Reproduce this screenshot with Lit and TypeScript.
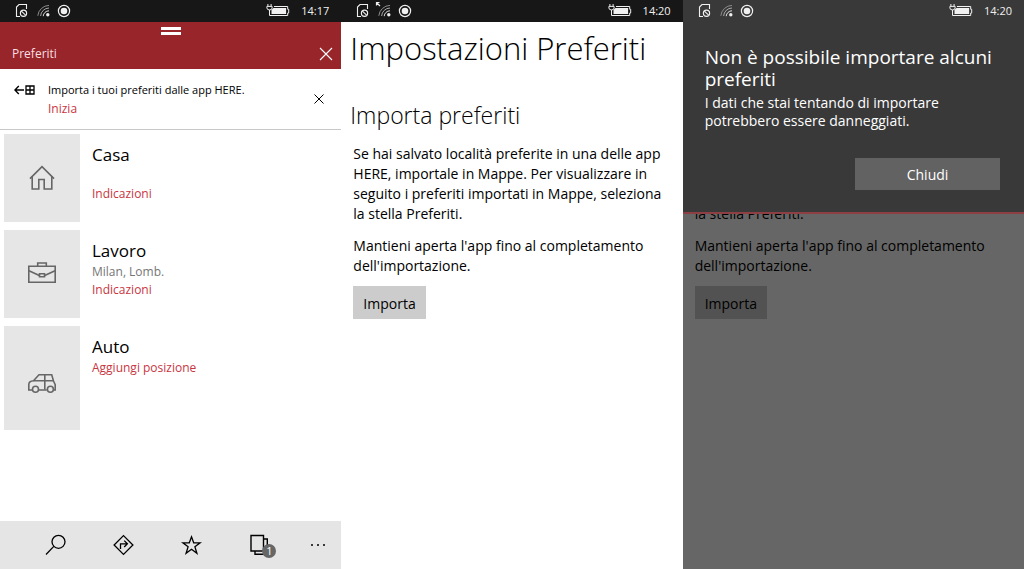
import { LitElement, html, svg, css, nothing } from "lit";
import { customElement, property } from "lit/decorators.js";

const base = css`
  :host {
    display: block;
    box-sizing: border-box;
    font-family: "Open Sans", "Noto Sans", sans-serif;
    color: #000;
  }
  *,
  *::before {
    box-sizing: border-box;
  }
  h1,
  h2,
  h3,
  p {
    margin: 0;
    font-weight: 400;
  }
  button {
    font: inherit;
    color: inherit;
    border: 0;
    padding: 0;
    background: none;
    cursor: pointer;
  }
  a {
    color: #c9353f;
    text-decoration: none;
  }
  svg {
    display: block;
    flex: none;
  }
`;

@customElement("status-bar")
class StatusBar extends LitElement {
  @property() time = "";
  @property({ type: Boolean }) roaming = false;

  static styles = [
    base,
    css`
      .bar {
        display: flex;
        align-items: center;
        height: 22px;
        padding: 0 12px 0 14px;
        color: #f0f0f0;
      }
      .spacer {
        flex: 1;
      }
      .time {
        margin-left: 11px;
        font-size: 11px;
        line-height: 22px;
      }
    `,
  ];

  render() {
    return html`<div class="bar">
      <svg width="60" height="22" viewBox="0 0 60 22" fill="none" stroke="currentColor">
        <path d="M6 16.5H2.5V7L5 4.5h7.5V9" stroke-width="1.1" />
        <circle cx="9.5" cy="13.2" r="3.1" stroke-width="1.2" />
        <path d="M7.4 11.2l4.2 4" stroke-width="1.1" />
        ${this.roaming
          ? svg`<path d="M21.5 5.5V2.5h3M22 3l3 3" stroke-width="1.2" />`
          : nothing}
        <path d="M23.8 15.8A11.5 11.5 0 0 1 35 5.4" stroke="#8c8c8c" />
        <path d="M26.6 16A8.6 8.6 0 0 1 35 8" stroke="#a8a8a8" />
        <path d="M29.2 16.2A5.8 5.8 0 0 1 35 10.8" stroke="#dedede" />
        <circle cx="33.8" cy="14.8" r="1.7" fill="currentColor" stroke="none" />
        <circle cx="50" cy="11" r="5.6" stroke-width="1.2" />
        <circle cx="50" cy="11" r="3.3" fill="currentColor" stroke="none" />
      </svg>
      <span class="spacer"></span>
      <svg width="24" height="22" viewBox="0 0 24 22" fill="none" stroke="currentColor">
        <path d="M1.9 4v2M5.1 4v2" />
        <path d="M.9 6.4h5.2v1.5a2.2 2.2 0 0 1-2.2 2H3.1a2.2 2.2 0 0 1-2.2-2z" />
        <path d="M3.5 10v5.500h18.200V13h1V9.300h-1V6.500H8" />
        <path d="M5.500 9.800 7.500 8h12.600v6H5.500z" fill="currentColor" stroke="none" />
      </svg>
      <span class="time">${this.time}</span>
    </div>`;
  }
}

const houseIcon = svg`<svg width="30" height="30" viewBox="0 0 30 30" fill="none" stroke="#666" stroke-width="1.600">
  <path d="M3 15.600 15 3.600l12 12" />
  <path d="M5.200 13.500V26h6.600v-9.500h5.400V26h7.600V13.500" />
</svg>`;

const caseIcon = svg`<svg width="30" height="30" viewBox="0 0 30 30" fill="none" stroke="#666" stroke-width="1.600">
  <path d="M1.800 7.300h26.400v16H1.800z" />
  <path d="M10.700 7V4h8.600v3" />
  <path d="M2 11.800l10.300 4.800M28 11.800l-10.300 4.800" />
  <path d="M12.500 14.800h5v3h-5z" />
</svg>`;

const carIcon = svg`<svg width="30" height="30" viewBox="0 0 30 30" fill="none" stroke="#666" stroke-width="1.600">
  <path d="M5.200 22H1.800v-5.500c0-2.300 1.600-3.600 4.700-3.800L12 6.800h12.700l1.800 6.200 1.700 3.600V22h-1.600M11.800 22h8" />
  <circle cx="8.500" cy="21.300" r="3" />
  <circle cx="23.400" cy="21.300" r="3" />
  <path d="M6.500 12.800h20M17.800 7v14.500" />
</svg>`;

const places = [
  { name: "Casa", detail: "\u00a0", action: "Indicazioni", icon: houseIcon, tall: false },
  { name: "Lavoro", detail: "Milan, Lomb.", action: "Indicazioni", icon: caseIcon, tall: false },
  { name: "Auto", detail: "", action: "Aggiungi posizione", icon: carIcon, tall: true },
];

@customElement("favorites-screen")
class FavoritesScreen extends LitElement {
  static styles = [
    base,
    css`
      :host {
        display: flex;
        flex-direction: column;
        background: #fff;
      }
      status-bar {
        background: #171717;
      }
      .drawer {
        background: #98252a;
        color: #f6dfe0;
        padding: 5px 0;
      }
      .grip {
        width: 20px;
        height: 8px;
        margin: 0 auto;
        border: solid #fff;
        border-width: 3px 0;
      }
      .drawer-row {
        display: flex;
        align-items: center;
        justify-content: space-between;
        padding: 9px 8px 0 12px;
      }
      .drawer-row h1 {
        font-size: 12px;
        line-height: 20px;
      }
      .banner {
        display: flex;
        align-items: center;
        height: 61px;
        padding: 0 15px 0 14px;
        border-bottom: 1px solid #c8c8c8;
      }
      .banner-icon {
        align-self: flex-start;
        margin: 15px 13px 0 0;
      }
      .banner-text {
        flex: 1;
        font-size: 12px;
        line-height: 19px;
      }
      .banner-text p {
        font-size: 11px;
      }
      .list {
        flex: 1;
        display: flex;
        flex-direction: column;
        gap: 8px;
        padding: 4px;
      }
      .place {
        display: flex;
        gap: 12px;
      }
      .tile {
        display: flex;
        align-items: center;
        justify-content: center;
        width: 76px;
        height: 88px;
        background: #e6e6e6;
      }
      .tile.tall {
        height: 104px;
        padding-top: 10px;
      }
      .info {
        padding-top: 9px;
        font-size: 12px;
        line-height: 18px;
      }
      .info h2 {
        font-size: 17px;
        line-height: 24px;
      }
      .info p {
        color: #767676;
      }
      .info a {
        display: block;
      }
      .appbar {
        display: grid;
        grid-template-columns: repeat(4, 1fr) 47px;
        height: 48px;
        padding-left: 22px;
        background: #e5e5e5;
      }
      .appbar button {
        display: flex;
        align-items: center;
        justify-content: center;
      }
      .stack {
        position: relative;
      }
      .count {
        position: absolute;
        left: 14px;
        top: 11px;
        width: 14px;
        height: 14px;
        border-radius: 50%;
        background: #666;
        color: #fff;
        font-size: 11px;
        line-height: 14px;
        text-align: center;
      }
    `,
  ];

  render() {
    return html`
      <status-bar time="14:17"></status-bar>
      <header class="drawer">
        <div class="grip"></div>
        <div class="drawer-row">
          <h1>Preferiti</h1>
          <button aria-label="Chiudi">
            <svg width="14" height="14" viewBox="0 0 14 14" stroke="#fff" stroke-width="1.100">
              <path d="M1 1l12 12M13 1 1 13" />
            </svg>
          </button>
        </div>
      </header>
      <section class="banner">
        <svg class="banner-icon" width="21" height="12" viewBox="0 0 21 12" fill="none" stroke="#000">
          <path d="M1 6h9M4.800 2 .9 6l3.900 4" stroke-width="1.400" />
          <path d="M12 2h8v8h-8zM16 2v8M12 6h8" stroke-width="1.300" />
        </svg>
        <div class="banner-text">
          <p>Importa i tuoi preferiti dalle app HERE.</p>
          <a href="#">Inizia</a>
        </div>
        <button aria-label="Ignora">
          <svg width="14" height="14" viewBox="0 0 14 14" stroke="#000" stroke-width="1">
            <path d="M2.500 2.500l9 9M11.500 2.500l-9 9" />
          </svg>
        </button>
      </section>
      <main class="list">
        ${places.map(
          (p) => html`<article class="place">
            <div class="tile ${p.tall ? "tall" : ""}">${p.icon}</div>
            <div class="info">
              <h2>${p.name}</h2>
              ${p.detail ? html`<p>${p.detail}</p>` : nothing}
              <a href="#">${p.action}</a>
            </div>
          </article>`
        )}
      </main>
      <nav class="appbar">
        <button aria-label="Cerca">
          <svg width="24" height="24" viewBox="0 0 24 24" fill="none" stroke="#000" stroke-width="1.300">
            <circle cx="14.500" cy="8.800" r="6.500" />
            <path d="M9.800 13.400 2 21.500" />
          </svg>
        </button>
        <button aria-label="Percorso">
          <svg width="24" height="24" viewBox="0 0 24 24" fill="none" stroke="#000" stroke-width="1.300">
            <path d="M11.500 2.600l9.400 9.400-9.400 9.400L2.100 12z" />
            <path d="M8.500 16v-5.200h6.500M12.200 7.600l3.200 3.200-3.200 3.200" />
          </svg>
        </button>
        <button aria-label="Aggiungi ai preferiti">
          <svg width="24" height="24" viewBox="0 0 24 24" fill="none" stroke="#000" stroke-width="1.300">
            <path d="M11.500 3.800l2.200 6h6.400l-5.200 4 2 6.500-5.400-4-5.400 4 2-6.500-5.200-4h6.400z" />
          </svg>
        </button>
        <button aria-label="Schede">
          <span class="stack">
            <svg width="24" height="24" viewBox="0 0 24 24" fill="none" stroke="#000" stroke-width="1.400">
              <path d="M3 2.500h12.500V18H3z" />
              <path d="M15.500 6h3.800v15.300H7V18" />
            </svg>
            <span class="count">1</span>
          </span>
        </button>
        <button aria-label="Altro">
          <svg width="16" height="4" viewBox="0 0 16 4" fill="#000">
            <circle cx="2" cy="2" r="1" />
            <circle cx="8" cy="2" r="1" />
            <circle cx="14" cy="2" r="1" />
          </svg>
        </button>
      </nav>
    `;
  }
}

const settingsText = css`
  .copy {
    font-size: 14px;
    line-height: 20px;
    padding: 0 12px;
  }
  .copy p {
    margin-bottom: 12px;
  }
  .copy p.last {
    margin-bottom: 10px;
  }
  .import {
    height: 33px;
    padding: 2px 10px 0;
    background: #ccc;
  }
`;

@customElement("settings-screen")
class SettingsScreen extends LitElement {
  static styles = [
    base,
    settingsText,
    css`
      :host {
        background: #fff;
      }
      status-bar {
        background: #171717;
      }
      h1 {
        padding: 4px 9px 0;
        font-size: 31px;
        line-height: 44px;
        font-weight: 300;
        white-space: nowrap;
      }
      h2 {
        padding: 29px 9px 13px;
        font-size: 23px;
        line-height: 32px;
        font-weight: 300;
      }
    `,
  ];

  render() {
    return html`
      <status-bar time="14:20" roaming></status-bar>
      <h1>Impostazioni Preferiti</h1>
      <h2>Importa preferiti</h2>
      <div class="copy">
        <p>
          Se hai salvato località preferite in una delle app HERE, importale in Mappe. Per
          visualizzare in seguito i preferiti importati in Mappe, seleziona la stella Preferiti.
        </p>
        <p class="last">Mantieni aperta l'app fino al completamento dell'importazione.</p>
        <button class="import">Importa</button>
      </div>
    `;
  }
}

@customElement("error-screen")
class ErrorScreen extends LitElement {
  static styles = [
    base,
    settingsText,
    css`
      :host {
        background: #666;
      }
      .dialog {
        position: relative;
        z-index: 1;
        background: #393939;
        border-bottom: 2px solid #8e3f43;
        color: #fff;
      }
      .body {
        padding: 24px 24px 22px 22px;
      }
      h1 {
        font-size: 19px;
        line-height: 22px;
      }
      .body p {
        margin-top: 4px;
        font-size: 14px;
        line-height: 18px;
      }
      .close {
        display: block;
        width: 145px;
        height: 32px;
        margin: 28px 0 0 auto;
        background: #626262;
        font-size: 14px;
      }
      .copy {
        margin-top: -10px;
      }
      .import {
        background: #525252;
      }
    `,
  ];

  render() {
    return html`
      <section class="dialog" role="alertdialog" aria-labelledby="title">
        <status-bar time="14:20"></status-bar>
        <div class="body">
          <h1 id="title">Non è possibile importare alcuni preferiti</h1>
          <p>I dati che stai tentando di importare potrebbero essere danneggiati.</p>
          <button class="close">Chiudi</button>
        </div>
      </section>
      <div class="copy">
        <p>la stella Preferiti.</p>
        <p class="last">Mantieni aperta l'app fino al completamento dell'importazione.</p>
        <button class="import">Importa</button>
      </div>
    `;
  }
}

@customElement("app-root")
class AppRoot extends LitElement {
  static styles = css`
    :host {
      display: grid;
      grid-template-columns: repeat(3, minmax(0, 1fr));
      min-height: 100vh;
    }
  `;

  render() {
    return html`
      <favorites-screen></favorites-screen>
      <settings-screen></settings-screen>
      <error-screen></error-screen>
    `;
  }
}
